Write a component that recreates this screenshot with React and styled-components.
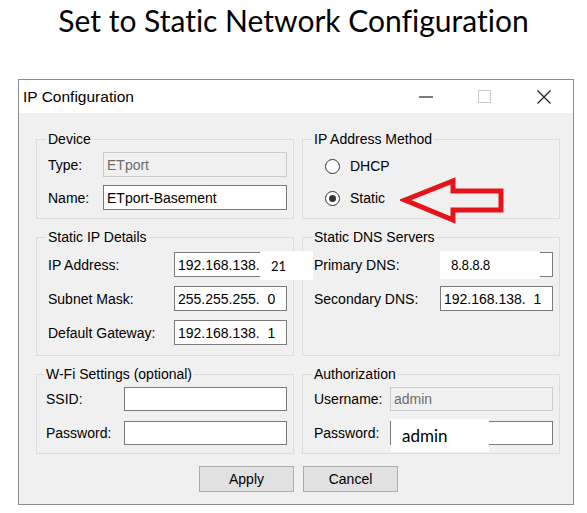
import React from "react";
import styled, { createGlobalStyle } from "styled-components";

const Global = createGlobalStyle`
  html, body { margin: 0; padding: 0; background: #fff; }
  body { width: 587px; height: 513px; overflow: hidden; }
`;

const Page = styled.div`
  width: 587px;
  height: 513px;
  display: flex;
  flex-direction: column;
`;

const Heading = styled.h1`
  margin: 0;
  height: 40px;
  line-height: 40px;
  text-align: center;
  font-family: Lato, "Open Sans", sans-serif;
  font-variant-ligatures: none;
  font-weight: 400;
  font-size: 30px;
  color: #000;
`;

const Window = styled.div`
  position: relative;
  margin: 39px 0 0 18px;
  width: 554px;
  border: 1px solid #8c8c8c;
  background: #f0f0f0;
  font-family: "Liberation Sans", Arial, sans-serif;
  font-size: 14px;
  color: #000;
`;

const TitleBar = styled.div`
  height: 33px;
  background: #fff;
  display: flex;
  align-items: center;
`;

const TitleText = styled.div`
  flex: 1;
  padding-left: 4px;
  font-size: 15.5px;
  color: #000;
`;

const CtrlButton = styled.div`
  width: 59px;
  height: 33px;
  display: flex;
  align-items: center;
  justify-content: center;
`;

const Body = styled.div`
  display: grid;
  grid-template-columns: 258px 258px;
  column-gap: 8px;
  row-gap: 9px;
  padding: 17px 13px 12px 17px;
`;

const Group = styled.fieldset`
  margin: 0;
  min-width: 0;
  border: 1px solid #dcdcdc;
  padding: ${(p) => p.$pt}px 6px ${(p) => p.$pb}px ${(p) => p.$pl}px;
  display: flex;
  flex-direction: column;
  gap: ${(p) => p.$gap}px;
`;

const Legend = styled.legend`
  padding: 0 2px;
  margin-left: -2px;
  line-height: 18px;
  font-size: 14px;
`;

const Row = styled.div`
  display: flex;
  align-items: center;
  justify-content: space-between;
  height: ${(p) => p.$h}px;
`;

const Label = styled.span`
  white-space: nowrap;
`;

const TextBox = styled.div`
  box-sizing: border-box;
  width: ${(p) => p.$w}px;
  height: 100%;
  border: 1px solid ${(p) => (p.$disabled ? "#cccccc" : "#7a7a7a")};
  background: ${(p) => (p.$disabled ? "#f0f0f0" : "#fff")};
  color: ${(p) => (p.$disabled ? "#6d6d6d" : "#000")};
  padding-left: 3px;
  display: flex;
  align-items: center;
  white-space: pre;
`;

const RadioList = styled.div`
  margin: 2px 0 0 11px;
  display: flex;
  flex-direction: column;
  gap: 8px;
`;

const RadioRow = styled.div`
  display: flex;
  align-items: center;
  gap: 10px;
  height: 24px;
`;

const RadioDot = styled.span`
  box-sizing: border-box;
  width: 15px;
  height: 15px;
  border-radius: 50%;
  border: 1px solid #333;
  background: #fff;
  display: flex;
  align-items: center;
  justify-content: center;
  &::after {
    content: "";
    width: 7px;
    height: 7px;
    border-radius: 50%;
    background: #333;
    display: ${(p) => (p.$checked ? "block" : "none")};
  }
`;

const ButtonCell = styled.div`
  margin-top: 3px;
  display: flex;
  justify-content: ${(p) => (p.$end ? "flex-end" : "flex-start")};
  padding-left: ${(p) => (p.$end ? 0 : 1)}px;
`;

const Button = styled.div`
  box-sizing: border-box;
  width: 95px;
  height: 26px;
  background: #e1e1e1;
  border: 1px solid #adadad;
  display: flex;
  align-items: center;
  justify-content: center;
`;

const Patch = styled.div`
  position: absolute;
  background: #fff;
  display: flex;
  align-items: center;
  padding-left: 11px;
  box-sizing: border-box;
  font-family: Lato, "Open Sans", sans-serif;
  font-size: ${(p) => p.$fs}px;
  color: #000;
  left: ${(p) => p.$x}px;
  top: ${(p) => p.$y}px;
  width: ${(p) => p.$w}px;
  height: ${(p) => p.$h}px;
`;

const ArrowSvg = styled.svg`
  position: absolute;
  left: 381px;
  top: 96px;
`;

function Field({ label, w, value, disabled, h }) {
  return (
    <Row $h={h}>
      <Label>{label}</Label>
      <TextBox $w={w} $disabled={disabled}>{value}</TextBox>
    </Row>
  );
}

function Radio({ label, checked }) {
  return (
    <RadioRow>
      <RadioDot $checked={checked} />
      <span>{label}</span>
    </RadioRow>
  );
}

export default function App() {
  return (
    <Page>
      <Global />
      <Heading>Set to Static Network Configuration</Heading>
      <Window>
        <TitleBar>
          <TitleText>IP Configuration</TitleText>
          <CtrlButton>
            <svg width="14" height="2" viewBox="0 0 14 2">
              <line x1="0" y1="1" x2="14" y2="1" stroke="#222" strokeWidth="1.2" />
            </svg>
          </CtrlButton>
          <CtrlButton>
            <svg width="13" height="13" viewBox="0 0 13 13">
              <rect x="0.5" y="0.5" width="12" height="12" fill="none" stroke="#c8c8c8" strokeWidth="1" />
            </svg>
          </CtrlButton>
          <CtrlButton>
            <svg width="14" height="14" viewBox="0 0 14 14">
              <path d="M0.5 0.5 L13.5 13.5 M13.5 0.5 L0.5 13.5" stroke="#222" strokeWidth="1.3" fill="none" />
            </svg>
          </CtrlButton>
        </TitleBar>
        <Body>
          <Group $pt={4} $pb={8} $pl={11} $gap={8}>
            <Legend>Device</Legend>
            <Field h={25} label="Type:" w={184} value="ETport" disabled />
            <Field h={25} label="Name:" w={184} value="ETport-Basement" />
          </Group>
          <Group $pt={4} $pb={8} $pl={11} $gap={8}>
            <Legend>IP Address Method</Legend>
            <RadioList>
              <Radio label="DHCP" />
              <Radio label="Static" checked />
            </RadioList>
          </Group>
          <Group $pt={6} $pb={10} $pl={11} $gap={9}>
            <Legend>Static IP Details</Legend>
            <Field h={25} label="IP Address:" w={113} value="192.168.138." />
            <Field h={25} label="Subnet Mask:" w={113} value="255.255.255.  0" />
            <Field h={25} label="Default Gateway:" w={113} value="192.168.138.  1" />
          </Group>
          <Group $pt={6} $pb={10} $pl={11} $gap={9}>
            <Legend>Static DNS Servers</Legend>
            <Field h={25} label="Primary DNS:" w={113} value="" />
            <Field h={25} label="Secondary DNS:" w={113} value="192.168.138.  1" />
          </Group>
          <Group $pt={4} $pb={8} $pl={9} $gap={10}>
            <Legend>W-Fi Settings (optional)</Legend>
            <Field h={24} label="SSID:" w={163} value="" />
            <Field h={24} label="Password:" w={163} value="" />
          </Group>
          <Group $pt={4} $pb={8} $pl={11} $gap={10}>
            <Legend>Authorization</Legend>
            <Field h={24} label="Username:" w={163} value="admin" disabled />
            <Field h={24} label="Password:" w={163} value="" />
          </Group>
          <ButtonCell $end>
            <Button>Apply</Button>
          </ButtonCell>
          <ButtonCell>
            <Button>Cancel</Button>
          </ButtonCell>
        </Body>
        <Patch $x={241} $y={171} $w={53} $h={29} $fs={13}>21</Patch>
        <Patch $x={421} $y={171} $w={100} $h={28} $fs={13}>8.8.8.8</Patch>
        <Patch $x={372} $y={339} $w={98} $h={33} $fs={17}>admin</Patch>
        <ArrowSvg width="106" height="50" viewBox="0 0 106 50">
          <polygon
            points="5,24 53,5 53,15 101,15 101,34 53,34 53,44"
            fill="none"
            stroke="#e5141b"
            strokeWidth="5"
            strokeLinejoin="miter"
          />
        </ArrowSvg>
      </Window>
    </Page>
  );
}
